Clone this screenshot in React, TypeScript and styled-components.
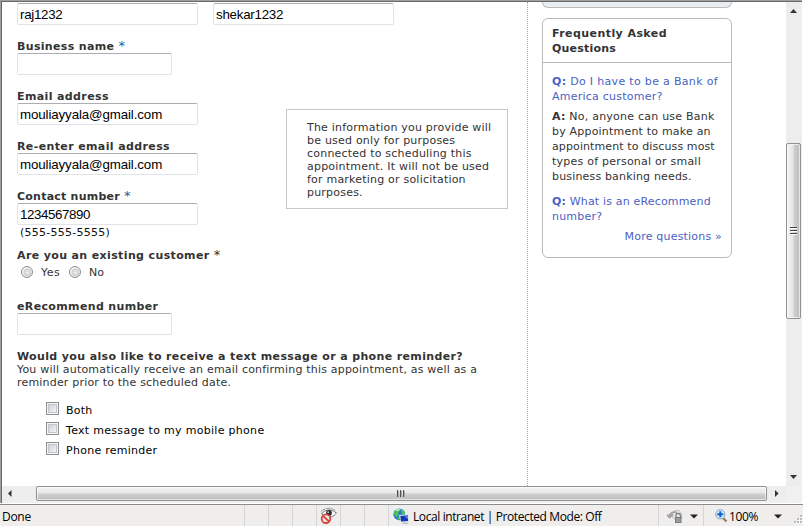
import React from 'react';
import styled, { createGlobalStyle, css } from 'styled-components';

const Global = createGlobalStyle`
  * { box-sizing: border-box; }
  body { margin: 0; background: #fff; overflow: hidden; }
`;

const Window = styled.div`
  width: 804px;
  height: 527px;
  display: flex;
  flex-direction: column;
  background: #fff;
  color: #333;
  font: 11px/13px 'DejaVu Sans', sans-serif;
`;

const Viewport = styled.div`
  width: 802px;
  height: 503px;
  display: grid;
  grid-template-columns: 784px 15px;
  grid-template-rows: 484px 15px;
  border-top: 1px solid #a0a0a0;
  border-left: 1px solid #a0a0a0;
  background: #f0f0f0;
  box-shadow: inset 1px 1px 0 #696969;
  padding: 1px 0 0 1px;
`;

const Page = styled.div`
  display: flex;
  background: #fff;
  overflow: hidden;
`;

const Form = styled.main`
  width: 526px;
  padding: 1px 0 0 15px;
  border-right: 1px dotted #aaa;
  flex: none;
`;

const Line = styled.span<{ $track?: number }>`
  display: block;
  white-space: nowrap;
  letter-spacing: ${(p) => p.$track ?? 0.2}px;
`;

const TextBox = styled.input<{ $width?: number; $track?: number }>`
  display: block;
  width: ${(p) => p.$width ?? 181}px;
  height: 22px;
  padding: 1px 2px 0;
  border: 1px solid #e2e3ea;
  border-top-color: #abadb3;
  border-radius: 2px;
  background: #fff;
  color: #000;
  font: 13.33px 'Liberation Sans', sans-serif;
  letter-spacing: ${(p) => p.$track ?? -0.12}px;
  outline: none;
`;

const NameRow = styled.div`
  display: flex;
  gap: 15px;
`;

const Details = styled.div`
  display: grid;
  grid-template-columns: 269px 222px;
  align-items: start;
  margin-top: 15px;
`;

const Fields = styled.div`
  display: flex;
  flex-direction: column;
  gap: 15px;
`;

const Label = styled(Line)`
  font-weight: bold;
  height: 13px;
`;

const Star = styled.span<{ $blue?: boolean }>`
  font-weight: normal;
  font-size: 13px;
  line-height: 1px;
  color: ${(p) => (p.$blue ? '#0f5fa8' : '#333')};
`;

const Notice = styled.aside`
  height: 100px;
  margin-top: 69px;
  padding: 11px 0 0 20px;
  border: 1px solid #c8c8c8;
`;

const Hint = styled.div`
  padding: 1px 0 0 3px;
  color: #111;
`;

const Existing = styled.section`
  margin-top: 10px;
`;

const RadioRow = styled.div`
  display: flex;
  align-items: center;
  height: 13px;
  margin: 3px 0 22px 4px;
`;

const Radio = styled.span`
  width: 12px;
  height: 12px;
  border: 1px solid #8e8f8f;
  border-radius: 50%;
  background: radial-gradient(circle at 55% 55%, #f0f1f2 0, #cbcfd5 45%, #f4f4f4 58%);
`;

const RadioText = styled(Line)`
  width: 36px;
  padding: 2px 0 0 8px;
`;

const Reminder = styled.section`
  margin-top: 15px;
`;

const Options = styled.div`
  display: flex;
  flex-direction: column;
  gap: 7px;
  margin: 13px 0 0 29px;
  color: #000;
`;

const Option = styled.label`
  display: flex;
  height: 13px;
  gap: 7px;
`;

const Check = styled.span`
  width: 13px;
  height: 13px;
  border: 1px solid #8e8f8f;
  background: linear-gradient(135deg, #c3c8cf, #f2f2f2 80%);
  box-shadow: inset 0 0 0 1px #f4f4f4, inset 0 0 0 2px #c2c6cd;
`;

const OptionText = styled(Line)`
  padding-top: 2px;
`;

const Sidebar = styled.div`
  width: 204px;
  padding-left: 14px;
  line-height: 15px;
`;

const CardAbove = styled.div`
  height: 6px;
  border: 1px solid #bbb;
  border-top: 0;
  border-radius: 0 0 6px 6px;
  background: #e9eef3;
`;

const Faq = styled.section`
  height: 240px;
  margin-top: 10px;
  border: 1px solid #bbb;
  border-radius: 6px;
`;

const FaqTitle = styled.header`
  height: 44px;
  padding: 7px 9px 0;
  border-bottom: 1px solid #bbb;
  font-weight: bold;
`;

const FaqBody = styled.div`
  display: flex;
  flex-direction: column;
  padding: 11px 9px 0;
`;

const Entry = styled.div<{ $link?: boolean; $after: number }>`
  color: ${(p) => (p.$link ? '#4a5fc4' : '#333')};
  margin-bottom: ${(p) => p.$after}px;
`;

const More = styled.a`
  align-self: flex-end;
  color: #4a5fc4;
`;

const Bar = styled.div<{ $vertical?: boolean }>`
  display: flex;
  align-items: center;
  background: #ededed;
  ${(p) =>
    p.$vertical &&
    css`
      flex-direction: column;
    `}
`;

const Thumb = styled.div<{ $vertical?: boolean }>`
  flex: none;
  display: flex;
  align-items: center;
  justify-content: center;
  border: 1px solid #919191;
  border-radius: 2px;
  width: ${(p) => (p.$vertical ? 15 : 731)}px;
  height: ${(p) => (p.$vertical ? 176 : 15)}px;
  box-shadow: inset 0 0 0 1px rgba(255, 255, 255, 0.6);
  background: linear-gradient(
    ${(p) => (p.$vertical ? '90deg' : '180deg')},
    #f4f4f4 0, #e6e6e7 48%, #d0d0d2 52%, #bcbdc0 100%
  );
`;

const SideSlot = styled.div`
  display: flex;
  align-items: center;
  justify-content: center;
  flex: none;
  width: 17px;
  height: 15px;
`;

const Track = styled.div<{ $h: number; $end?: boolean }>`
  display: flex;
  flex: none;
  justify-content: center;
  align-items: ${(p) => (p.$end ? 'flex-end' : 'flex-start')};
  width: 15px;
  height: ${(p) => p.$h}px;
  padding: ${(p) => (p.$end ? '0 0 6px' : '5px 0 0')};
`;

const Drawing = styled.svg`
  display: block;
  flex: none;
`;

const Status = styled.footer`
  height: 23px;
  width: 803px;
  display: flex;
  align-items: stretch;
  margin-top: 1px;
  border-top: 1px solid #8c8c8c;
  background: #f0eded;
  border-bottom: 1px solid #fff;
  color: #000;
  font: 12px/20px 'Open Sans', sans-serif;
`;

const Cell = styled.div<{ $w: number; $pad?: number; $last?: boolean }>`
  width: ${(p) => p.$w}px;
  flex: none;
  display: flex;
  align-items: center;
  padding: 1px 0 0 ${(p) => p.$pad ?? 0}px;
  border-right: ${(p) => (p.$last ? 0 : 1)}px solid #d5d5d5;
`;

const StatusText = styled(Line)<{ $left?: number; $w?: number }>`
  margin-left: ${(p) => p.$left ?? 0}px;
  padding-top: 1px;
  width: ${(p) => (p.$w ? `${p.$w}px` : 'auto')};
`;

const Gap = styled.span<{ $w: number }>`
  flex: none;
  width: ${(p) => p.$w}px;
`;

const Grip = ({ vertical }: { vertical?: boolean }) => (
  <Drawing width="9" height="9" viewBox="0 0 9 9" shapeRendering="crispEdges">
    {[0, 3, 6].map((n) =>
      vertical ? (
        <g key={n}><path d={`M1 ${n + 0.5}h7`} stroke="#444" /><path d={`M2 ${n + 1.5}h6`} stroke="#fff" /></g>
      ) : (
        <g key={n}><path d={`M${n + 0.5} 1v7`} stroke="#555" /><path d={`M${n + 1.5} 2v6`} stroke="#aaa" /></g>
      )
    )}
  </Drawing>
);

const arrows = {
  up: 'M3.5 2 L7 6 H0Z',
  down: 'M0 2 H7 L3.5 6Z',
  left: 'M1 3.5 L4.5 0 V7Z',
  right: 'M6.5 3.5 L3 0 V7Z',
};

const Arrow = ({ dir }: { dir: keyof typeof arrows }) => (
  <Drawing width="7" height="7" viewBox="0 0 7 7"><path d={arrows[dir]} fill="#333" /></Drawing>
);

const PrivacyEye = () => (
  <Drawing width="18" height="18" viewBox="0 0 18 18">
    <path d="M1.5 6.5Q8.5-.5 16.5 6Q12 11.5 6 10Z" fill="#fff" stroke="#666" strokeWidth=".9" />
    <path d="M1 4.5Q8-1.6 15.5 3.6" fill="none" stroke="#777" strokeWidth=".9" strokeDasharray="2 .7" />
    <circle cx="9" cy="6" r="2.9" fill="#2c2c30" />
    <circle cx="8.2" cy="5.2" r=".9" fill="#ccc" />
    <circle cx="6" cy="11.7" r="4.3" fill="#fbe5e3" stroke="#d04741" strokeWidth="1.8" />
    <path d="M3 8.9L9 14.5" stroke="#d04741" strokeWidth="1.8" />
  </Drawing>
);

const Intranet = () => (
  <Drawing width="17" height="17" viewBox="0 0 17 17">
    <circle cx="6.3" cy="6.3" r="5.9" fill="#2878d0" />
    <path d="M1 6Q1 2 5 1L7 3L5 5L6 7L3 9ZM8 1Q12 3 12 6L9 6L8 3ZM4 10l3-2 2 3-3 1Z" fill="#4cc44a" />
    <path d="M2 3Q4 0 8 1L5 3Z" fill="#b9efc0" />
    <path d="M6 7l10-1v8l-8 .5Z" fill="#d9e3ef" />
    <path d="M7.3 8l7.7-.8v5.8l-7 .4Z" fill="#1739b4" />
    <path d="M11 7.7l4-.5v4Z" fill="#5a84e8" />
    <path d="M10 14.5h4l1.5 1.5H9Z" fill="#b8bcc0" />
  </Drawing>
);

const LockedPage = () => (
  <Drawing width="17" height="15" viewBox="0 0 17 15">
    <path d="M5 4Q8 0 12 1.5Q15.5 4 15 9Q10 13 6 9Z" fill="#e6e6e6" stroke="#c2c2c2" />
    <path d="M2.5 7Q4 2 10 3.5M0 5.5l2.5 3 3.5-3" fill="none" stroke="#a0a0a0" strokeWidth="1.8" />
    <path d="M9 8V6.5a2.2 2.2 0 014.4 0V8" fill="none" stroke="#777" strokeWidth="1.2" />
    <rect x="8" y="8" width="6.5" height="6" fill="#7c7c7c" />
    <path d="M9 10h4.5M9 12h4.5" stroke="#bbb" />
  </Drawing>
);

const Magnifier = () => (
  <Drawing width="13" height="14" viewBox="0 0 13 14">
    <path d="M8 9l3.5 3.5" stroke="#a67b52" strokeWidth="2.4" />
    <circle cx="5.3" cy="5.3" r="4.6" fill="#d9ebfb" stroke="#7da5cb" />
    <path d="M5.3 2.3v6M2.3 5.3h6" stroke="#1262c4" strokeWidth="2" />
  </Drawing>
);

const DropArrow = () => (
  <Drawing width="8" height="5" viewBox="0 0 8 5"><path d="M0 .5h8L4 4.5Z" fill="#222" /></Drawing>
);

const SizeGrip = () => (
  <Drawing width="9" height="15" viewBox="0 0 9 15" shapeRendering="crispEdges">
    {[[6, 6], [3, 9], [6, 9], [0, 12], [3, 12], [6, 12]].map(([x, y]) => (
      <g key={`${x}-${y}`}><rect x={x + 1} y={y + 1} width="2" height="2" fill="#fff" /><rect x={x} y={y} width="2" height="2" fill="#bdbdbd" /></g>
    ))}
  </Drawing>
);

const notice = [
  'The information you provide will',
  'be used only for purposes',
  'connected to scheduling this',
  'appointment. It will not be used',
  'for marketing or solicitation',
  'purposes.',
];

export default function App() {
  return (
    <Window>
      <Global />
      <Viewport>
        <Page>
          <Form>
            <NameRow>
              <TextBox $track={-0.3} defaultValue="raj1232" />
              <TextBox $track={-0.25} defaultValue="shekar1232" />
            </NameRow>
            <Details>
              <Fields>
                <div><Label $track={0.33}>Business name <Star $blue>*</Star></Label><TextBox $width={155} /></div>
                <div><Label $track={0.38}>Email address</Label><TextBox defaultValue="mouliayyala@gmail.com" /></div>
                <div><Label $track={0.38}>Re-enter email address</Label><TextBox defaultValue="mouliayyala@gmail.com" /></div>
                <div><Label $track={0.23}>Contact number <Star $blue>*</Star></Label><TextBox $track={-0.42} defaultValue="1234567890" /></div>
              </Fields>
              <Notice>
                {notice.map((text) => <Line key={text} $track={0.21}>{text}</Line>)}
              </Notice>
            </Details>
            <Hint><Line $track={0.26}>(555-555-5555)</Line></Hint>
            <Existing>
              <Label $track={0.37}>Are you an existing customer <Star>*</Star></Label>
              <RadioRow>
                <Radio /><RadioText $track={0.5}>Yes</RadioText>
                <Radio /><RadioText $track={0}>No</RadioText>
              </RadioRow>
            </Existing>
            <Label $track={0.36}>eRecommend number</Label>
            <TextBox $width={155} />
            <Reminder>
              <Label $track={0.365}>Would you also like to receive a text message or a phone reminder?</Label>
              <Line $track={0.19}>You will automatically receive an email confirming this appointment, as well as a</Line>
              <Line $track={0.19}>reminder prior to the scheduled date.</Line>
              <Options>
                <Option><Check /><OptionText>Both</OptionText></Option>
                <Option><Check /><OptionText $track={0.3}>Text message to my mobile phone</OptionText></Option>
                <Option><Check /><OptionText $track={0.27}>Phone reminder</OptionText></Option>
              </Options>
            </Reminder>
          </Form>
          <Sidebar>
            <CardAbove />
            <Faq>
              <FaqTitle><Line $track={0.43}>Frequently Asked</Line><Line $track={0.2}>Questions</Line></FaqTitle>
              <FaqBody>
                <Entry $link $after={5}>
                  <Line $track={0.32}><b>Q:</b> Do I have to be a Bank of</Line>
                  <Line $track={0.24}>America customer?</Line>
                </Entry>
                <Entry $after={10}>
                  <Line $track={0.23}><b>A:</b> No, anyone can use Bank</Line>
                  <Line>by Appointment to make an</Line>
                  <Line $track={0.11}>appointment to discuss most</Line>
                  <Line $track={0.23}>types of personal or small</Line>
                  <Line $track={0.17}>business banking needs.</Line>
                </Entry>
                <Entry $link $after={5}>
                  <Line $track={0.17}><b>Q:</b> What is an eRecommend</Line>
                  <Line>number?</Line>
                </Entry>
                <More><Line>More questions »</Line></More>
              </FaqBody>
            </Faq>
          </Sidebar>
        </Page>
        <Bar $vertical>
          <Track $h={141}><Arrow dir="up" /></Track>
          <Thumb $vertical><Grip vertical /></Thumb>
          <Track $h={167} $end><Arrow dir="down" /></Track>
        </Bar>
        <Bar>
          <SideSlot><Arrow dir="left" /></SideSlot>
          <Gap $w={17} />
          <Thumb><Grip /></Thumb>
          <SideSlot><Arrow dir="right" /></SideSlot>
        </Bar>
      </Viewport>
      <Status>
        <Cell $w={245} $pad={2}><StatusText $track={-0.3}>Done</StatusText></Cell>
        <Cell $w={24} /><Cell $w={24} /><Cell $w={24} />
        <Cell $w={24} $pad={3}><PrivacyEye /></Cell>
        <Cell $w={24} /><Cell $w={24} />
        <Cell $w={270} $pad={4}><Intranet /><StatusText $left={3} $track={-0.4}>Local intranet | Protected Mode: Off</StatusText></Cell>
        <Cell $w={45} $pad={8}><LockedPage /><Gap $w={6} /><DropArrow /></Cell>
        <Cell $w={99} $pad={11} $last>
          <Magnifier /><StatusText $left={1} $w={45} $track={-0.4}>100%</StatusText><DropArrow /><Gap $w={12} /><SizeGrip />
        </Cell>
      </Status>
    </Window>
  );
}
